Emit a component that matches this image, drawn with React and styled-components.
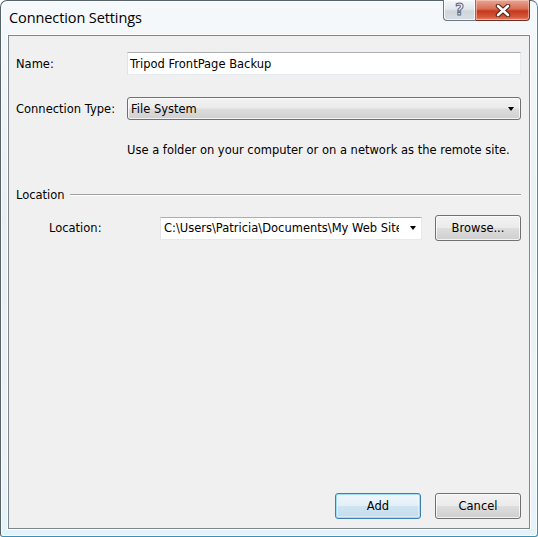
import React from 'react';
import styled, { createGlobalStyle, css } from 'styled-components';

const GlobalStyle = createGlobalStyle`
  html, body {
    margin: 0;
    padding: 0;
    background: #ffffff;
    overflow: hidden;
  }
  * {
    box-sizing: border-box;
  }
`;

const uiFont = `"DejaVu Sans", Tahoma, sans-serif`;

const Window = styled.div`
  width: 538px;
  height: 537px;
  display: flex;
  flex-direction: column;
  border: 1px solid #56636d;
  border-right-color: #3d8fb3;
  border-bottom-color: #3d8fb3;
  border-radius: 7px 7px 3px 3px;
  background: linear-gradient(180deg, #f6f9fb 0%, #e9eff3 40%, #edf2f5 85%, #e4f3f8 100%);
  box-shadow: inset 1px 1px 0 #ffffff, inset -1px -1px 0 #ffffff;
`;

const TitleBar = styled.div`
  height: 34px;
  flex: none;
  display: flex;
  justify-content: space-between;
  align-items: flex-start;
  padding-left: 8px;
`;

const Title = styled.div`
  font-family: "Open Sans", "Noto Sans", sans-serif;
  font-size: 14.5px;
  color: #000;
  margin-top: 7px;
  letter-spacing: -0.1px;
`;

const Captions = styled.div`
  display: flex;
  margin-right: 7px;
  margin-top: -1px;
`;

const CaptionButton = styled.div`
  height: 21px;
  display: flex;
  align-items: center;
  justify-content: center;
  border: 1px solid #6d7a85;
  border-top: none;
  ${p => p.$close ? css`
    width: 54px;
    border-left: none;
    border-color: #6e2f27;
    border-radius: 0 0 4px 0;
    background: linear-gradient(180deg, #e8a792 0%, #d86c55 45%, #c4391f 55%, #d8563a 85%, #e58a6c 100%);
    box-shadow: inset 0 0 0 1px rgba(255, 220, 210, 0.5);
  ` : css`
    width: 33px;
    border-radius: 0 0 0 4px;
    background: linear-gradient(180deg, #f4f6f8 0%, #e3e8ec 45%, #cfd6dc 55%, #d8dee3 100%);
    box-shadow: inset 0 0 0 1px rgba(255, 255, 255, 0.7);
  `}
`;

const HelpGlyph = styled.span`
  font-family: "DejaVu Sans", sans-serif;
  font-weight: bold;
  font-size: 15px;
  color: #f4f6f8;
  -webkit-text-stroke: 1px #5c6873;
  line-height: 1;
  margin-top: 1px;
`;

const Client = styled.div`
  flex: 1;
  margin: 0 7px 7px 7px;
  border: 1px solid #7c8790;
  box-shadow: 0 0 0 1px #ffffff;
  background: #f0f0f0;
  display: flex;
  flex-direction: column;
  padding: 16px 8px 9px 7px;
  font-family: ${uiFont};
  font-size: 11.5px;
  color: #000;
`;

const Row = styled.div`
  display: flex;
  align-items: center;
  margin-bottom: ${p => p.$gap || 0}px;
  padding-left: ${p => p.$indent || 0}px;
`;

const Label = styled.div`
  width: 111px;
  flex: none;
`;

const TextBox = styled.div`
  flex: 1;
  height: 23px;
  background: #ffffff;
  border: 1px solid #e3e9ef;
  border-top-color: #abadb3;
  border-left-color: #e2e3ea;
  display: flex;
  align-items: center;
  padding-left: 2px;
  overflow: hidden;
  white-space: nowrap;
`;

const buttonFace = css`
  border: 1px solid #707070;
  border-radius: 3px;
  background: linear-gradient(180deg, #f2f2f2 0%, #ebebeb 48%, #dddddd 52%, #cfcfcf 100%);
  box-shadow: inset 0 0 0 1px rgba(255, 255, 255, 0.75);
`;

const Select = styled.div`
  ${buttonFace};
  flex: 1;
  height: 23px;
  display: flex;
  align-items: center;
  justify-content: space-between;
  padding: 0 6px 0 3px;
`;

const Arrow = styled.span`
  width: 0;
  height: 0;
  border-left: 3.5px solid transparent;
  border-right: 3.5px solid transparent;
  border-top: 4px solid #000;
  margin-right: ${p => p.$mr || 0}px;
  flex: none;
`;

const Hint = styled.div`
  padding-left: 111px;
  margin-bottom: 31px;
`;

const GroupHeader = styled.div`
  display: flex;
  align-items: center;
  gap: 5px;
  margin-bottom: 13px;
`;

const GroupLine = styled.div`
  flex: 1;
  height: 2px;
  border-top: 1px solid #a0a0a0;
  border-bottom: 1px solid #ffffff;
`;

const Combo = styled.div`
  width: 262px;
  height: 23px;
  background: #ffffff;
  border: 1px solid #e3e9ef;
  border-top-color: #abadb3;
  border-left-color: #e2e3ea;
  display: flex;
  align-items: center;
  padding-left: 3px;
  flex: none;
`;

const ComboText = styled.div`
  flex: 1;
  overflow: hidden;
  white-space: nowrap;
  margin-right: 11px;
`;

const Button = styled.div`
  ${buttonFace};
  width: 86px;
  height: 26px;
  display: flex;
  align-items: center;
  justify-content: center;
  flex: none;
  margin-left: ${p => p.$ml || 0}px;
  ${p => p.$default && css`
    border-color: #3c7fb1;
    box-shadow: inset 0 0 0 1px #9fdcf6, inset 0 0 0 2px rgba(255, 255, 255, 0.4);
    background: linear-gradient(180deg, #eef6fb 0%, #e3eff7 48%, #cfe4f1 52%, #c3dcec 100%);
  `}
`;

const Footer = styled.div`
  margin-top: auto;
  display: flex;
  justify-content: flex-end;
  gap: 14px;
`;

export default function App() {
  return (
    <>
      <GlobalStyle />
      <Window>
        <TitleBar>
          <Title>Connection Settings</Title>
          <Captions>
            <CaptionButton>
              <HelpGlyph>?</HelpGlyph>
            </CaptionButton>
            <CaptionButton $close>
              <svg width="16" height="13" viewBox="0 0 16 13">
                <path
                  d="M3 2 L13 11 M13 2 L3 11"
                  stroke="#4a2018"
                  strokeWidth="4.5"
                  strokeLinecap="round"
                />
                <path
                  d="M3 2 L13 11 M13 2 L3 11"
                  stroke="#ffffff"
                  strokeWidth="2.6"
                  strokeLinecap="round"
                />
              </svg>
            </CaptionButton>
          </Captions>
        </TitleBar>
        <Client>
          <Row $gap={22}>
            <Label>Name:</Label>
            <TextBox>Tripod FrontPage Backup</TextBox>
          </Row>
          <Row $gap={23}>
            <Label>Connection Type:</Label>
            <Select>
              <span>File System</span>
              <Arrow />
            </Select>
          </Row>
          <Hint>Use a folder on your computer or on a network as the remote site.</Hint>
          <GroupHeader>
            <span>Location</span>
            <GroupLine />
          </GroupHeader>
          <Row $indent={33}>
            <Label>Location:</Label>
            <Combo>
              <ComboText>C:\Users\Patricia\Documents\My Web Sites</ComboText>
              <Arrow $mr={5} />
            </Combo>
            <Button $ml={13}>Browse...</Button>
          </Row>
          <Footer>
            <Button $default>Add</Button>
            <Button>Cancel</Button>
          </Footer>
        </Client>
      </Window>
    </>
  );
}
